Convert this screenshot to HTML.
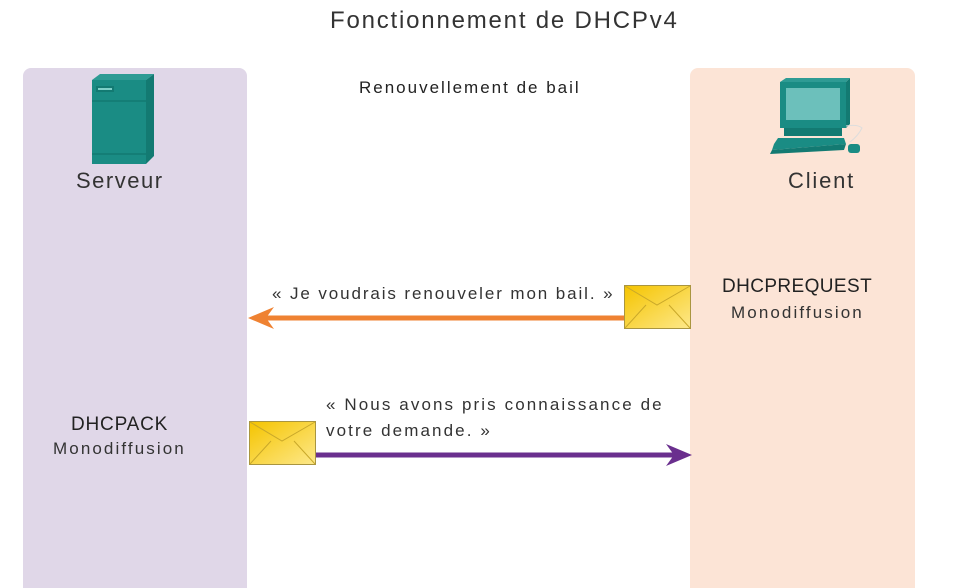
<!DOCTYPE html>
<html><head><meta charset="utf-8"><style>
body{margin:0;width:977px;height:579px;background:#fff;position:relative;overflow:hidden;font-family:"Liberation Sans",sans-serif;color:#333}
.a{position:absolute;white-space:nowrap}
.p{position:absolute;border-radius:8px 8px 0 0}
</style></head><body>
<div class="a" style="left:330px;top:7px;font-size:24px;letter-spacing:1.8px;color:#333">Fonctionnement de DHCPv4</div>
<div class="p" style="left:23px;top:68px;width:224px;height:520px;background:#e0d7e8"></div>
<div class="p" style="left:690px;top:68px;width:225px;height:520px;background:#fce4d6"></div>
<div class="a" style="left:359px;top:78px;font-size:17px;letter-spacing:2px;color:#222">Renouvellement de bail</div>
<svg class="a" style="left:86px;top:72px" width="70" height="96" viewBox="0 0 70 96">
<polygon points="6,8 14,2 68,2 60,8" fill="#2e9b94"/>
<polygon points="60,8 68,2 68,84 60,92" fill="#137a72"/>
<rect x="6" y="8" width="54" height="84" fill="#1a8c84"/>
<line x1="6" y1="29" x2="60" y2="29" stroke="#137a72" stroke-width="1.5"/>
<line x1="6" y1="82" x2="60" y2="82" stroke="#137a72" stroke-width="1.5"/>
<rect x="10" y="14" width="18" height="6" fill="#137a72"/><rect x="12" y="16" width="14" height="2" fill="#7fd0c8"/>
</svg>
<div class="a" style="left:76px;top:168px;font-size:22px;letter-spacing:1.5px;color:#333">Serveur</div>
<svg class="a" style="left:770px;top:78px" width="96" height="82" viewBox="0 0 96 82">
<polygon points="10,4 16,0 80,0 76,4" fill="#2e9b94"/>
<rect x="10" y="4" width="66" height="46" fill="#1a8c84"/>
<polygon points="76,4 80,0 80,46 76,50" fill="#137a72"/>
<rect x="16" y="10" width="54" height="32" fill="#6cc0bb"/>
<rect x="14" y="50" width="58" height="8" fill="#137a72"/>
<polygon points="8,60 74,60 76,66 2,72 4,66" fill="#1a8c84"/>
<polygon points="2,72 76,66 74,72 0,76" fill="#137a72"/>
<rect x="78" y="66" width="12" height="9" rx="3" fill="#1a8c84"/>
<path d="M80,64 Q88,58 92,50 Q88,46 76,48" stroke="#ddd" fill="none"/>
</svg>
<div class="a" style="left:788px;top:168px;font-size:22px;letter-spacing:1.8px;color:#333">Client</div>
<div class="a" style="left:272px;top:284px;font-size:17px;letter-spacing:1.9px;color:#333">« Je voudrais renouveler mon bail. »</div>
<svg class="a" style="left:246px;top:300px" width="384" height="36"><line x1="14" y1="18" x2="384" y2="18" stroke="#ef8232" stroke-width="5"/><polygon points="2,18 28,7 20,18 28,29" fill="#ef8232"/></svg>
<svg class="a" style="left:624px;top:285px" width="67" height="44"><defs><linearGradient id="g" x1="0" y1="0" x2="1" y2="1"><stop offset="0" stop-color="#f5c400"/><stop offset="1" stop-color="#fde88a"/></linearGradient></defs><rect x="0.5" y="0.5" width="66" height="43" fill="url(#g)" stroke="#a99540"/><path d="M1,1 L33,20 L66,1 M1,43 L22,20 M66,43 L45,20" stroke="#c9a82a" fill="none"/></svg>
<div class="a" style="left:722px;top:276px;font-size:19px;letter-spacing:0.4px;color:#222">DHCPREQUEST</div>
<div class="a" style="left:731px;top:303px;font-size:17px;letter-spacing:2.1px;color:#333">Monodiffusion</div>
<div class="a" style="left:326px;top:392px;font-size:17px;letter-spacing:2.1px;color:#333;line-height:26px">« Nous avons pris connaissance de<br>votre demande. »</div>
<svg class="a" style="left:249px;top:421px" width="67" height="44"><rect x="0.5" y="0.5" width="66" height="43" fill="url(#g)" stroke="#a99540"/><path d="M1,1 L33,20 L66,1 M1,43 L22,20 M66,43 L45,20" stroke="#c9a82a" fill="none"/></svg>
<svg class="a" style="left:316px;top:437px" width="378" height="36"><line x1="0" y1="18" x2="364" y2="18" stroke="#6a2f8e" stroke-width="5"/><polygon points="376,18 350,7 358,18 350,29" fill="#6a2f8e"/></svg>
<div class="a" style="left:71px;top:414px;font-size:19px;letter-spacing:0.8px;color:#222">DHCPACK</div>
<div class="a" style="left:53px;top:439px;font-size:17px;letter-spacing:2.1px;color:#333">Monodiffusion</div>
</body></html>
